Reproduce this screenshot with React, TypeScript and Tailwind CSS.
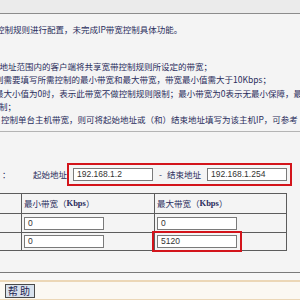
import React from 'react';

const Box = ({ value, w = 'w-[80px]' }: { value: string; w?: string }) => (
  <div className={`${w} h-[13px] bg-white border border-[#7a7a7a] pl-[3px] flex items-center text-[#333] font-['Liberation_Sans',sans-serif] text-[8.5px]`}>
    {value}
  </div>
);

const App: React.FC = () => {
  return (
    <div className="w-[300px] h-[300px] overflow-hidden bg-[#f4f4f4] text-[8.5px] text-[#2a2d5c] font-['Noto_Sans_CJK_SC','Noto_Sans_CJK_JP',sans-serif]">
      {/* top bar */}
      <div className="h-[14px] bg-[#ebebeb] border-b border-[#8c8c8c]"></div>

      {/* intro */}
      <div className="mt-[9px] h-[13px] leading-[13px] whitespace-nowrap -ml-[4px]">
        控制规则进行配置，未完成IP带宽控制具体功能。
      </div>

      {/* notes */}
      <div className="mt-[24px] h-[67px] leading-[13.3px] whitespace-nowrap">
        <div className="-ml-[6px]">P地址范围内的客户端将共享宽带控制规则所设定的带宽；</div>
        <div className="-ml-[5px]">则需要填写所需控制的最小带宽和最大带宽，带宽最小值需大于10Kbps；</div>
        <div className="-ml-[5px]">最大小值为0时，表示此带宽不做控制规则限制；最小带宽为0表示无最小保障，最大带宽</div>
        <div className="-ml-[1px]">制；</div>
        <div className="ml-[1px]">控制单台主机带宽，则可将起始地址或（和）结束地址填写为该主机IP，可参考</div>
      </div>

      <div className="mt-[4px] border-t border-[#b4b4b4]"></div>

      {/* address range */}
      <div className="mt-[31px] h-[23px] flex items-center">
        <div className="w-[33px] pl-[2px]">：</div>
        <div className="w-[34px]">起始地址</div>
        <div className="w-[225px] h-[23px] border-2 border-[#d3141b] pl-[4px] flex items-center">
          <Box value="192.168.1.2" />
          <div className="ml-[6px] w-[8px]">-</div>
          <div className="w-[34px]">结束地址</div>
          <div className="ml-[6px]">
            <Box value="192.168.1.254" />
          </div>
        </div>
      </div>

      {/* bandwidth table */}
      <div className="mt-[7px] w-[287px] border-t border-r border-[#5c5c5c]">
        <div className="h-[20px] flex border-b border-[#5c5c5c]">
          <div className="w-[21px]"></div>
          <div className="w-[133px] border-l border-[#5c5c5c] pl-[2px] flex items-center">
            最小带宽（<span className="font-['Liberation_Serif',serif] font-bold">Kbps</span>）
          </div>
          <div className="flex-1 border-l border-[#5c5c5c] pl-[2px] flex items-center">
            最大带宽（<span className="font-['Liberation_Serif',serif] font-bold">Kbps</span>）
          </div>
        </div>
        <div className="h-[19px] flex border-b border-[#5c5c5c]">
          <div className="w-[21px]"></div>
          <div className="w-[133px] border-l border-[#5c5c5c] pl-[2px] flex items-center">
            <Box value="0" />
          </div>
          <div className="flex-1 border-l border-[#5c5c5c] pl-[2px] flex items-center">
            <Box value="0" />
          </div>
        </div>
        <div className="h-[18px] flex border-b border-[#5c5c5c]">
          <div className="w-[21px]"></div>
          <div className="w-[133px] border-l border-[#5c5c5c] pl-[2px] flex items-center">
            <Box value="0" />
          </div>
          <div className="relative flex-1 border-l border-[#5c5c5c] pl-[2px] flex items-center">
            <Box value="5120" />
            <div className="absolute left-[-3px] top-[-2px] w-[90px] h-[21px] border-2 border-[#d3141b]"></div>
          </div>
        </div>
      </div>

      {/* footer */}
      <div className="mt-[21px] border-t border-[#7a7a7a]"></div>
      <div className="h-[7px] bg-[#f7f7f7]"></div>
      <div className="h-[2px] bg-[#ecd7b6]"></div>
      <div className="h-[17px] bg-[#fbf8f2] flex items-center">
        <div className="ml-[5px] w-[30px] h-[14px] border border-[#4a4a4a] bg-[#d8e1ec] flex items-center justify-center text-[10px] tracking-[2px] text-[#1f2452]">
          帮助
        </div>
      </div>
      <div className="h-[2px] bg-[#ecd7b6]"></div>
    </div>
  );
};

export default App;
